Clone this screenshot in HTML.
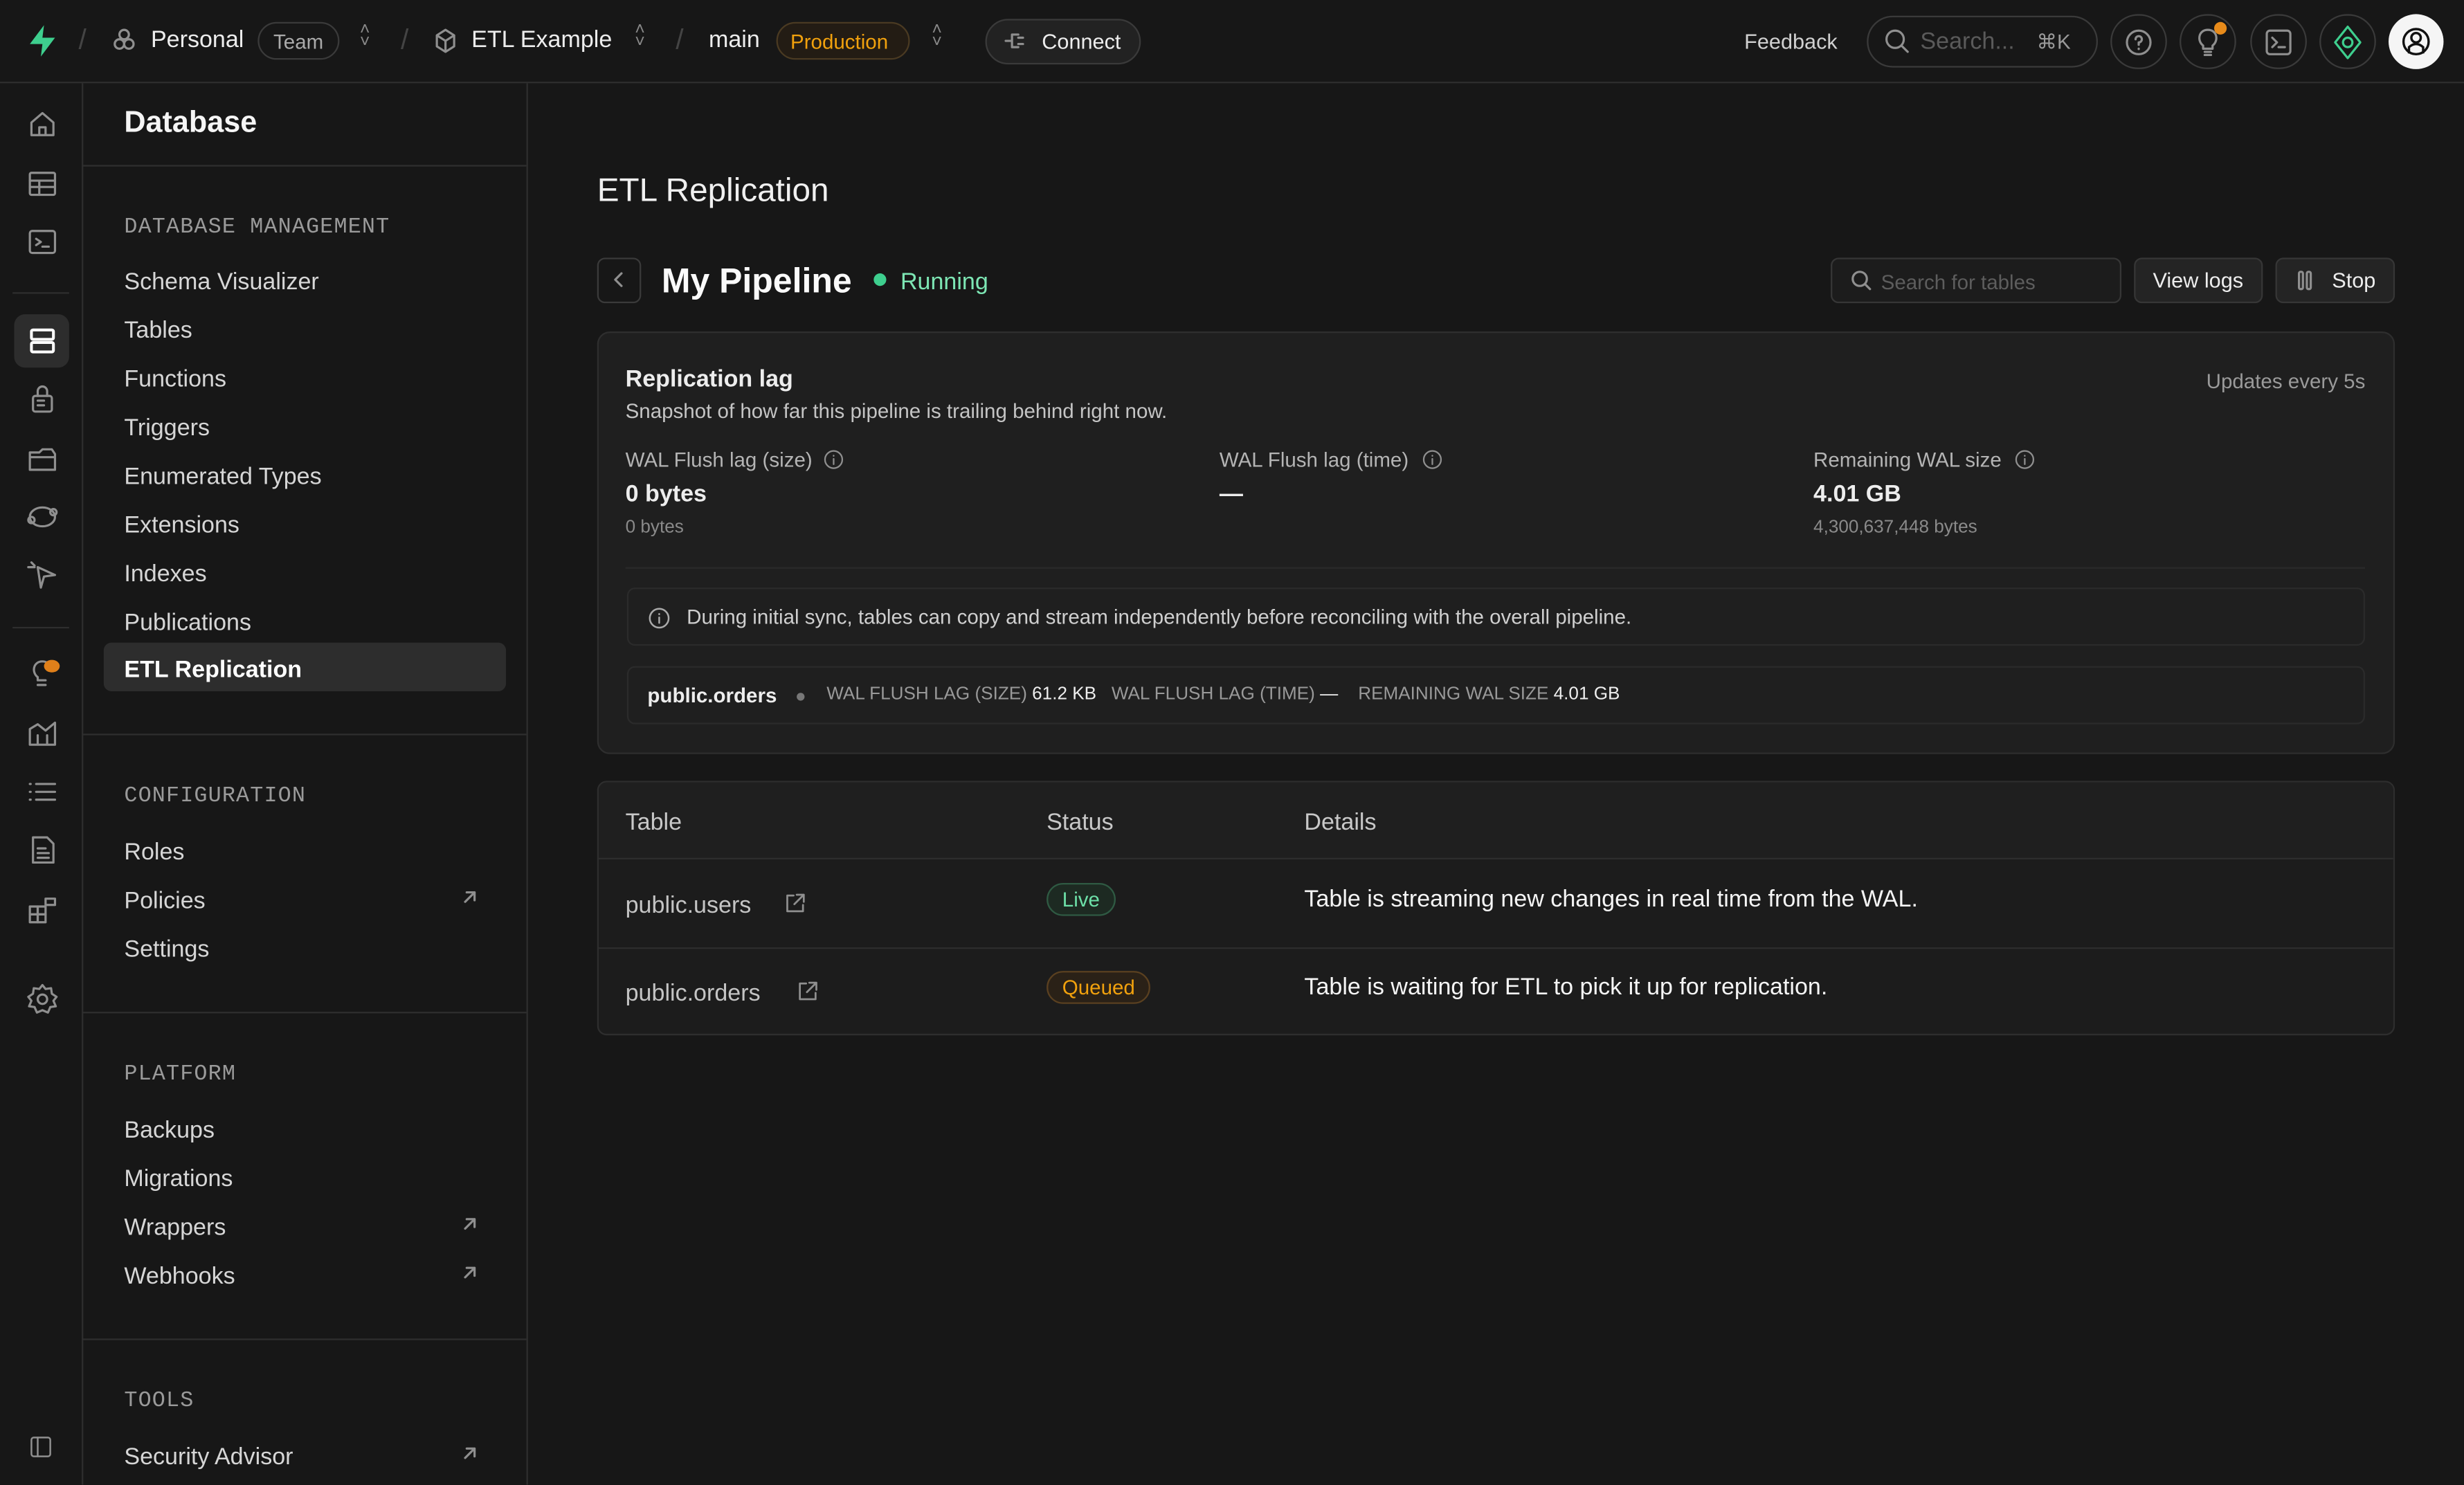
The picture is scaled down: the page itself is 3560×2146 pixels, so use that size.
<!DOCTYPE html>
<html><head><meta charset="utf-8"><style>
*{box-sizing:border-box;margin:0;padding:0}
html,body{width:3560px;height:2146px;overflow:hidden;background:#171717}
#r{position:absolute;left:0;top:0;width:1568px;height:945px;transform:scale(2.2704);transform-origin:0 0;font-family:"Liberation Sans",sans-serif;color:#ededed;background:#171717}
.a{position:absolute;white-space:nowrap}
.pill{position:absolute;border:1px solid #3a3a3a;border-radius:999px}
.ic{position:absolute;fill:none;stroke:#8f8f8f;stroke-width:1.4;stroke-linecap:round;stroke-linejoin:round}
.hdr{font-family:"Liberation Mono",monospace;font-size:14px;color:#9a9a9a;letter-spacing:.5px}
.it{font-size:15px;color:#d6d6d6}
.sep{position:absolute;left:52px;width:283px;height:1px;background:#2e2e2e}
.lbl{font-size:13px;color:#b4b4b4}
.badge{position:absolute;border-radius:999px;font-size:13px;padding:2px 9px}
</style></head><body><div id="r">
<!-- top bar -->
<div class="a" style="left:0;top:52px;width:1568px;height:1px;background:#2e2e2e"></div>
<svg class="a" style="left:16px;top:15px" width="22" height="22" viewBox="0 0 22 22"><path d="M12 1 L3 13 H11 L10 21 L19 9 H11 Z" fill="#3ecf8e"/></svg>
<div class="a" style="left:50px;top:15px;color:#444;font-size:18px">/</div>
<svg class="ic" style="left:71px;top:18px" width="16" height="16" viewBox="0 0 16 16"><circle cx="8" cy="4" r="3"/><circle cx="5" cy="10" r="3"/><circle cx="11" cy="10" r="3"/></svg>
<div class="a" style="left:96px;top:17px;font-size:15px">Personal</div>
<div class="pill" style="left:164px;top:14px;width:52px;height:24px"></div><div class="a" style="left:174px;top:19px;font-size:13px;color:#aaa">Team</div>
<div class="a" style="left:229px;top:15px;color:#888;font-size:11px;line-height:8px">˄<br>˅</div>
<div class="a" style="left:255px;top:15px;color:#444;font-size:18px">/</div>
<svg class="ic" style="left:276px;top:18px" width="15" height="16" viewBox="0 0 15 16"><path d="M7.5 1 L13 4.5 V11.5 L7.5 15 L2 11.5 V4.5 Z M2 4.5 L7.5 8 L13 4.5 M7.5 8 V15"/></svg>
<div class="a" style="left:300px;top:17px;font-size:15px">ETL Example</div>
<div class="a" style="left:404px;top:15px;color:#888;font-size:11px;line-height:8px">˄<br>˅</div>
<div class="a" style="left:430px;top:15px;color:#444;font-size:18px">/</div>
<div class="a" style="left:451px;top:17px;font-size:15px">main</div>
<div class="pill" style="left:494px;top:14px;width:85px;height:24px;background:#231c14;border-color:#4a3a22"></div><div class="a" style="left:503px;top:19px;font-size:13px;color:#f1a10d">Production</div>
<div class="a" style="left:593px;top:15px;color:#888;font-size:11px;line-height:8px">˄<br>˅</div>
<div class="pill" style="left:627px;top:12px;width:99px;height:29px;background:#222"></div>
<svg class="ic" style="left:639px;top:19px" width="16" height="14" viewBox="0 0 16 14"><path d="M1 7H4 M5 3V11 M5 3H9 M5 11H9 M9 5H12 M9 9H12"/></svg>
<div class="a" style="left:663px;top:19px;font-size:13.5px">Connect</div>
<div class="a" style="left:1110px;top:19px;font-size:13.5px;color:#d0d0d0">Feedback</div>
<div class="pill" style="left:1188px;top:10px;width:147px;height:33px"></div>
<svg class="ic" style="left:1199px;top:18px" width="16" height="16" viewBox="0 0 16 16"><circle cx="7" cy="7" r="5.5"/><path d="M11 11L15 15"/></svg>
<div class="a" style="left:1222px;top:18px;font-size:15px;color:#5a5a5a">Search...</div>
<div class="a" style="left:1296px;top:19px;font-size:13px;color:#999">⌘K</div>
<div class="pill" style="left:1343px;top:9px;width:36px;height:35px"></div>
<svg class="ic" style="left:1352px;top:18px" width="18" height="18" viewBox="0 0 18 18"><circle cx="9" cy="9" r="7.5"/><path d="M7 7 A2 2 0 1 1 9 9 V10.5 M9 13V13.2"/></svg>
<div class="pill" style="left:1387px;top:9px;width:36px;height:35px"></div>
<svg class="ic" style="left:1397px;top:17px" width="16" height="20" viewBox="0 0 16 20"><path d="M5 12 C1 9 2 2 8 2 C14 2 15 9 11 12 V14 H5 Z M6 16H10 M6 18H10"/></svg>
<div class="a" style="left:1409px;top:14px;width:8px;height:8px;border-radius:50%;background:#e88b1a"></div>
<div class="pill" style="left:1432px;top:9px;width:36px;height:35px"></div>
<svg class="ic" style="left:1441px;top:18px" width="18" height="18" viewBox="0 0 18 18"><rect x="1.5" y="1.5" width="15" height="15" rx="2"/><path d="M5 6L8 9L5 12 M9 12H13"/></svg>
<div class="pill" style="left:1476px;top:9px;width:36px;height:35px"></div>
<svg class="ic" style="left:1484px;top:16px;stroke:#3ecf8e" width="20" height="22" viewBox="0 0 20 22"><path d="M10 1L18 11L10 21L2 11Z"/><circle cx="10" cy="11" r="3"/></svg>
<div class="a" style="left:1520px;top:9px;width:35px;height:35px;border-radius:50%;background:#f5f5f5"></div>
<svg class="a" style="left:1527px;top:16px" width="21" height="21" viewBox="0 0 21 21" fill="none" stroke="#111" stroke-width="1.5"><circle cx="10.5" cy="10.5" r="8"/><circle cx="10.5" cy="8" r="3"/><path d="M6 18 V14 Q10.5 10 15 14 V18"/></svg>
<!-- left icon rail -->
<div class="a" style="left:52px;top:53px;width:1px;height:892px;background:#2e2e2e"></div>
<svg class="ic" style="left:17px;top:69px" width="20" height="20" viewBox="0 0 20 20"><path d="M3 9L10 3L17 9V17H3Z M8 17V12H12V17"/></svg>
<svg class="ic" style="left:17px;top:107px" width="20" height="20" viewBox="0 0 20 20"><rect x="2" y="3" width="16" height="14" rx="1"/><path d="M2 8H18 M2 12H18 M8 8V17"/></svg>
<svg class="ic" style="left:17px;top:144px" width="20" height="20" viewBox="0 0 20 20"><rect x="2" y="3" width="16" height="14" rx="1.5"/><path d="M6 8L9 10L6 12 M10 13H14"/></svg>
<div class="a" style="left:8px;top:186px;width:36px;height:1px;background:#2e2e2e"></div>
<div class="a" style="left:9px;top:200px;width:35px;height:34px;border-radius:7px;background:#2d2d2d"></div>
<svg class="ic" style="left:17px;top:207px;stroke:#fff;stroke-width:1.8" width="20" height="20" viewBox="0 0 20 20"><rect x="3" y="3" width="14" height="6" rx="1"/><rect x="3" y="11" width="14" height="6" rx="1"/></svg>
<svg class="ic" style="left:17px;top:244px" width="20" height="20" viewBox="0 0 20 20"><rect x="4" y="8" width="12" height="10" rx="1.5"/><path d="M7 8V5A3 3 0 0 1 13 5V8 M7 11H11 M7 14H11"/></svg>
<svg class="ic" style="left:17px;top:282px" width="20" height="20" viewBox="0 0 20 20"><path d="M2 6H8L10 4H16L18 7V17H2Z M2 9H18"/></svg>
<svg class="ic" style="left:16px;top:319px" width="22" height="20" viewBox="0 0 22 20"><ellipse cx="11" cy="10" rx="8" ry="6"/><circle cx="4" cy="12" r="2"/><circle cx="18" cy="7" r="2"/></svg>
<svg class="ic" style="left:16px;top:356px" width="22" height="20" viewBox="0 0 22 20"><path d="M8 5L19 10L12 11L10 18Z M2 5H6 M4 2L6 4"/></svg>
<div class="a" style="left:8px;top:399px;width:36px;height:1px;background:#2e2e2e"></div>
<svg class="ic" style="left:17px;top:418px" width="20" height="22" viewBox="0 0 20 22"><path d="M7 13C3 10 4 3 10 3C13 3 15 5 15 8 M7 13V15H12 M7 18H12"/></svg>
<div class="a" style="left:28px;top:420px;width:10px;height:8px;border-radius:50%;background:#e0801a"></div>
<svg class="ic" style="left:17px;top:456px" width="20" height="20" viewBox="0 0 20 20"><path d="M2 18V8L7 5L12 9L18 4V18 M2 18H18 M7 12V18 M13 12V18"/></svg>
<svg class="ic" style="left:17px;top:494px" width="20" height="20" viewBox="0 0 20 20"><path d="M2 5H2.5 M2 10H2.5 M2 15H2.5 M6 5H18 M6 10H18 M6 15H18"/></svg>
<svg class="ic" style="left:17px;top:531px" width="20" height="20" viewBox="0 0 20 20"><path d="M4 2H13L17 6V18H4Z M7 9H12 M7 12H14 M7 15H14"/></svg>
<svg class="ic" style="left:17px;top:569px" width="20" height="20" viewBox="0 0 20 20"><rect x="2" y="8" width="5" height="5"/><rect x="7" y="8" width="5" height="5"/><rect x="2" y="13" width="5" height="5"/><rect x="7" y="13" width="5" height="5"/><rect x="12" y="3" width="6" height="4"/></svg>
<svg class="ic" style="left:16px;top:625px" width="22" height="22" viewBox="0 0 22 22"><circle cx="11" cy="11" r="3"/><path d="M11 2L13 4.5L16.5 4L17 7.5L20 9.5L18 12L19.5 15.5L16 16L14.5 19.5L11 18L7.5 19.5L6 16L2.5 15.5L4 12L2 9.5L5 7.5L5.5 4L9 4.5Z"/></svg>
<svg class="ic" style="left:19px;top:914px;stroke-width:1.1" width="14" height="14" viewBox="0 0 14 14"><rect x="1" y="1" width="12" height="12" rx="1.5"/><path d="M5 1V13"/></svg>
<!-- menu -->
<div class="a" style="left:335px;top:53px;width:1px;height:892px;background:#2e2e2e"></div>
<div class="a" style="left:79px;top:68px;font-size:19px;font-weight:bold;color:#f5f5f5">Database</div>
<div class="sep" style="top:105px"></div>
<div class="a hdr" style="left:79px;top:137px">DATABASE MANAGEMENT</div>
<div class="a it" style="left:79px;top:171px">Schema Visualizer</div>
<div class="a it" style="left:79px;top:202px">Tables</div>
<div class="a it" style="left:79px;top:233px">Functions</div>
<div class="a it" style="left:79px;top:264px">Triggers</div>
<div class="a it" style="left:79px;top:295px">Enumerated Types</div>
<div class="a it" style="left:79px;top:326px">Extensions</div>
<div class="a it" style="left:79px;top:357px">Indexes</div>
<div class="a it" style="left:79px;top:388px">Publications</div>
<div class="a" style="left:66px;top:409px;width:256px;height:31px;border-radius:5px;background:#2d2d2d"></div>
<div class="a it" style="left:79px;top:418px;color:#fff;font-weight:bold">ETL Replication</div>
<div class="sep" style="top:467px"></div>
<div class="a hdr" style="left:79px;top:499px">CONFIGURATION</div>
<div class="a it" style="left:79px;top:534px">Roles</div>
<div class="a it" style="left:79px;top:565px">Policies</div>
<div class="a it" style="left:79px;top:596px">Settings</div>
<div class="sep" style="top:644px"></div>
<div class="a hdr" style="left:79px;top:676px">PLATFORM</div>
<div class="a it" style="left:79px;top:711px">Backups</div>
<div class="a it" style="left:79px;top:742px">Migrations</div>
<div class="a it" style="left:79px;top:773px">Wrappers</div>
<div class="a it" style="left:79px;top:804px">Webhooks</div>
<div class="sep" style="top:852px"></div>
<div class="a hdr" style="left:79px;top:884px">TOOLS</div>
<div class="a it" style="left:79px;top:919px">Security Advisor</div>
<svg class="ic" style="left:294px;top:566px" width="10" height="10" viewBox="0 0 10 10"><path d="M2 8L8 2M3 2H8V7"/></svg>
<svg class="ic" style="left:294px;top:774px" width="10" height="10" viewBox="0 0 10 10"><path d="M2 8L8 2M3 2H8V7"/></svg>
<svg class="ic" style="left:294px;top:805px" width="10" height="10" viewBox="0 0 10 10"><path d="M2 8L8 2M3 2H8V7"/></svg>
<svg class="ic" style="left:294px;top:920px" width="10" height="10" viewBox="0 0 10 10"><path d="M2 8L8 2M3 2H8V7"/></svg>
<!-- main -->
<div class="a" style="left:380px;top:110px;font-size:21px;color:#f0f0f0">ETL Replication</div>
<div class="a" style="left:380px;top:164px;width:28px;height:29px;border:1px solid #3a3a3a;border-radius:5px"></div>
<svg class="ic" style="left:388px;top:172px" width="12" height="12" viewBox="0 0 12 12"><path d="M7.5 2L3.5 6L7.5 10"/></svg>
<div class="a" style="left:421px;top:166px;font-size:22px;font-weight:bold;color:#fafafa">My Pipeline</div>
<div class="a" style="left:556px;top:174px;width:8px;height:8px;border-radius:50%;background:#3ecf8e"></div>
<div class="a" style="left:573px;top:171px;font-size:15px;color:#7de6b4">Running</div>
<div class="a" style="left:1165px;top:164px;width:185px;height:29px;border:1px solid #363636;border-radius:5px;background:#1c1c1c"></div>
<svg class="ic" style="left:1177px;top:171px" width="15" height="15" viewBox="0 0 15 15"><circle cx="6.5" cy="6.5" r="4.5"/><path d="M10 10L13 13"/></svg>
<div class="a" style="left:1197px;top:172px;font-size:13px;color:#5d5d5d">Search for tables</div>
<div class="a" style="left:1358px;top:164px;width:82px;height:29px;border:1px solid #363636;border-radius:5px;background:#242424"></div>
<div class="a" style="left:1370px;top:171px;font-size:13.5px">View logs</div>
<div class="a" style="left:1448px;top:164px;width:76px;height:29px;border:1px solid #363636;border-radius:5px;background:#242424"></div>
<svg class="ic" style="left:1461px;top:172px" width="12" height="13" viewBox="0 0 12 13"><rect x="2" y="1" width="2.5" height="11" rx="1"/><rect x="7" y="1" width="2.5" height="11" rx="1"/></svg>
<div class="a" style="left:1484px;top:171px;font-size:13.5px">Stop</div>
<!-- card -->
<div class="a" style="left:380px;top:211px;width:1144px;height:269px;border:1px solid #2e2e2e;border-radius:8px;background:#1f1f1f"></div>
<div class="a" style="left:398px;top:233px;font-size:15px;font-weight:bold">Replication lag</div>
<div class="a" style="left:398px;top:254px;font-size:13px;color:#c4c4c4">Snapshot of how far this pipeline is trailing behind right now.</div>
<div class="a" style="left:1404px;top:235px;font-size:13px;color:#9a9a9a">Updates every 5s</div>
<div class="a lbl" style="left:398px;top:285px">WAL Flush lag (size)</div>
<div class="a lbl" style="left:776px;top:285px">WAL Flush lag (time)</div>
<div class="a lbl" style="left:1154px;top:285px">Remaining WAL size</div>
<svg class="ic" style="left:524px;top:286px;stroke-width:1" width="13" height="13" viewBox="0 0 13 13"><circle cx="6.5" cy="6.5" r="5.5"/><path d="M6.5 6V9.5M6.5 4V4.2"/></svg>
<svg class="ic" style="left:905px;top:286px;stroke-width:1" width="13" height="13" viewBox="0 0 13 13"><circle cx="6.5" cy="6.5" r="5.5"/><path d="M6.5 6V9.5M6.5 4V4.2"/></svg>
<svg class="ic" style="left:1282px;top:286px;stroke-width:1" width="13" height="13" viewBox="0 0 13 13"><circle cx="6.5" cy="6.5" r="5.5"/><path d="M6.5 6V9.5M6.5 4V4.2"/></svg>
<div class="a" style="left:398px;top:306px;font-size:15px;font-weight:bold">0 bytes</div>
<div class="a" style="left:776px;top:306px;font-size:15px;font-weight:bold">—</div>
<div class="a" style="left:1154px;top:306px;font-size:15px;font-weight:bold">4.01 GB</div>
<div class="a" style="left:398px;top:330px;font-size:11.5px;color:#8a8a8a">0 bytes</div>
<div class="a" style="left:1154px;top:330px;font-size:11.5px;color:#8a8a8a">4,300,637,448 bytes</div>
<div class="a" style="left:398px;top:361px;width:1107px;height:1px;background:#2a2a2a"></div>
<div class="a" style="left:399px;top:374px;width:1106px;height:37px;border:1px solid #2b2b2b;border-radius:5px"></div>
<svg class="ic" style="left:412px;top:386px;stroke-width:1.1;stroke:#aaa" width="15" height="15" viewBox="0 0 15 15"><circle cx="7.5" cy="7.5" r="6"/><path d="M7.5 7V10.5M7.5 4.8V5"/></svg>
<div class="a" style="left:437px;top:385px;font-size:13px;color:#cfcfcf">During initial sync, tables can copy and stream independently before reconciling with the overall pipeline.</div>
<div class="a" style="left:399px;top:424px;width:1106px;height:37px;border:1px solid #2b2b2b;border-radius:5px"></div>
<div class="a" style="left:412px;top:435px;font-size:13px;font-weight:bold">public.orders</div>
<div class="a" style="left:507px;top:441px;width:5px;height:5px;border-radius:50%;background:#777"></div>
<div class="a" style="left:526px;top:436px;font-size:11.5px;color:#999">WAL FLUSH LAG (SIZE) <span style="color:#eee">61.2 KB</span>&nbsp;&nbsp;&nbsp;WAL FLUSH LAG (TIME) <span style="color:#eee">—</span>&nbsp;&nbsp;&nbsp;&nbsp;REMAINING WAL SIZE <span style="color:#eee">4.01 GB</span></div>
<!-- table -->
<div class="a" style="left:380px;top:497px;width:1144px;height:162px;border:1px solid #2e2e2e;border-radius:6px;background:#1c1c1c;overflow:hidden">
<div style="position:absolute;left:0;top:0;width:100%;height:49px;background:#1f1f1f;border-bottom:1px solid #2e2e2e"></div>
<div style="position:absolute;left:0;top:105px;width:100%;height:1px;background:#2e2e2e"></div>
</div>
<div class="a" style="left:398px;top:515px;font-size:15px;color:#c8c8c8">Table</div>
<div class="a" style="left:666px;top:515px;font-size:15px;color:#c8c8c8">Status</div>
<div class="a" style="left:830px;top:515px;font-size:15px;color:#c8c8c8">Details</div>
<div class="a" style="left:398px;top:568px;font-size:15px;color:#c4c4c4">public.users</div>
<svg class="ic" style="left:499px;top:568px;stroke-width:1.2" width="14" height="14" viewBox="0 0 14 14"><path d="M6 2H2V12H12V8 M8 1.5H12.5V6 M12.5 1.5L6.5 7.5"/></svg>
<div class="badge" style="left:666px;top:562px;border:1px solid #2f5a43;background:#1d2a22;color:#6de0a8">Live</div>
<div class="a" style="left:830px;top:564px;font-size:15px;color:#f5f5f5">Table is streaming new changes in real time from the WAL.</div>
<div class="a" style="left:398px;top:624px;font-size:15px;color:#c4c4c4">public.orders</div>
<svg class="ic" style="left:507px;top:624px;stroke-width:1.2" width="14" height="14" viewBox="0 0 14 14"><path d="M6 2H2V12H12V8 M8 1.5H12.5V6 M12.5 1.5L6.5 7.5"/></svg>
<div class="badge" style="left:666px;top:618px;border:1px solid #5a4020;background:#2a2117;color:#f1a10d">Queued</div>
<div class="a" style="left:830px;top:620px;font-size:15px;color:#f5f5f5">Table is waiting for ETL to pick it up for replication.</div>
</div></body></html>
